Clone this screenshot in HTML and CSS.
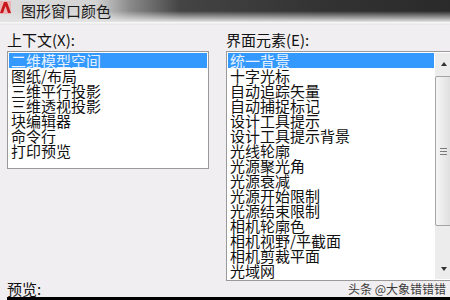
FILE: index.html
```html
<!DOCTYPE html>
<html lang="zh-CN">
<head>
<meta charset="utf-8">
<title>图形窗口颜色</title>
<link rel="stylesheet" href="styles.css">
</head>
<body>
<div class="window">
  <div class="titlebar">
    <svg class="appicon" width="11" height="15" viewBox="0 0 11 15">
      <rect x="0" y="1" width="11" height="13" fill="#e8b4b4"/>
      <path d="M0 13 L4 2 L7 2 L11 13 L8 13 L5.5 6 L3 13 Z" fill="#c8161d"/>
    </svg>
    <span class="title">图形窗口颜色</span>
  </div>
  <div class="sep"></div>
  <div class="main">
    <div class="label">上下文(X):</div>
    <div class="label">界面元素(E):</div>
    <ul class="list context">
      <li class="sel">二维模型空间</li>
      <li>图纸/布局</li>
      <li>三维平行投影</li>
      <li>三维透视投影</li>
      <li>块编辑器</li>
      <li>命令行</li>
      <li>打印预览</li>
    </ul>
    <div class="list elements">
      <ul class="items">
        <li class="sel">统一背景</li>
        <li>十字光标</li>
        <li>自动追踪矢量</li>
        <li>自动捕捉标记</li>
        <li>设计工具提示</li>
        <li>设计工具提示背景</li>
        <li>光线轮廓</li>
        <li>光源聚光角</li>
        <li>光源衰减</li>
        <li>光源开始限制</li>
        <li>光源结束限制</li>
        <li>相机轮廓色</li>
        <li>相机视野/平截面</li>
        <li>相机剪裁平面</li>
        <li>光域网</li>
      </ul>
      <div class="scrollbar">
        <div class="btn"><span class="arrow up"></span></div>
        <div class="track">
          <div class="thumb"><span class="grip"></span></div>
        </div>
        <div class="btn"><span class="arrow down"></span></div>
      </div>
    </div>
    <div class="label preview-label">预览:</div>
    <div class="watermark">头条 @大象错错错</div>
  </div>
  <div class="preview"></div>
</div>
</body>
</html>
```
FILE: styles.css
```css
html, body {
  margin: 0;
  padding: 0;
}
body {
  width: 450px;
  height: 300px;
  overflow: hidden;
  background: #f0eef0;
  font-family: "Noto Sans CJK SC", "Noto Sans", sans-serif;
  color: #111;
}
.window {
  width: 450px;
  height: 300px;
  overflow: hidden;
}
.titlebar {
  height: 22px;
  display: flex;
  align-items: flex-start;
  background:
    linear-gradient(to bottom, rgba(230,230,230,0) 50%, #e4e4e4 100%),
    linear-gradient(to right, #dcdcdc 0, #d4d4d4 95px, #8a8a8a 130px, #444 180px, #333 320px, #2a2a2a 100%);
}
.appicon {
  display: block;
}
.title {
  margin-left: 10px;
  font-size: 15px;
  line-height: 21px;
  color: #1a1a1a;
}
.sep {
  height: 3px;
  background: linear-gradient(to bottom, #fafafa, #e6e4e6);
}
.main {
  display: grid;
  grid-template-columns: 202px 226px;
  grid-template-rows: 22px 230px 16px;
  column-gap: 17px;
  padding: 4px 0 0 7px;
}
.label {
  font-size: 15px;
  line-height: 22px;
  white-space: nowrap;
}
.list {
  margin: 0;
  padding: 1px;
  list-style: none;
  background: #fff;
  border: 1px solid #9a9a9a;
  box-sizing: border-box;
}
.list li, .items li {
  font-size: 15px;
  line-height: 15px;
  height: 15px;
  padding-left: 2px;
  white-space: nowrap;
}
.list li.sel {
  background: #3399ff;
  color: #e6f1ff;
}
.context {
  height: 118px;
  align-self: start;
}
.elements {
  height: 230px;
  display: flex;
  padding-right: 0;
  border-right: none;
  overflow: hidden;
}
.items {
  margin: 0;
  padding: 0;
  list-style: none;
  width: 206px;
  flex: none;
}
.scrollbar {
  width: 17px;
  margin-left: 1px;
  display: flex;
  flex-direction: column;
  background: #ececec;
}
.btn {
  height: 21px;
  flex: none;
  display: flex;
  align-items: center;
  justify-content: center;
}
.arrow {
  width: 0;
  height: 0;
  border-left: 3px solid transparent;
  border-right: 3px solid transparent;
}
.arrow.up {
  border-bottom: 4px solid #333;
}
.arrow.down {
  border-top: 4px solid #333;
}
.track {
  flex: 1;
}
.thumb {
  margin-top: 2px;
  height: 150px;
  box-sizing: border-box;
  border: 1px solid #a4a4a4;
  border-radius: 2px;
  background: linear-gradient(to right, #f6f6f6, #dedede);
  display: flex;
  align-items: center;
  justify-content: center;
}
.grip {
  width: 7px;
  height: 5px;
  border-top: 1px solid #7a7a7a;
  border-bottom: 1px solid #7a7a7a;
  position: relative;
}
.grip::after {
  content: "";
  position: absolute;
  left: 0;
  right: 0;
  top: 2px;
  border-top: 1px solid #7a7a7a;
}
.preview-label {
  line-height: 16px;
}
.watermark {
  font-size: 12px;
  line-height: 16px;
  text-align: right;
  padding-right: 6px;
  color: #3a3a3a;
  white-space: nowrap;
}
.preview {
  margin-left: 7px;
  height: 3px;
  background: #000;
}
```
